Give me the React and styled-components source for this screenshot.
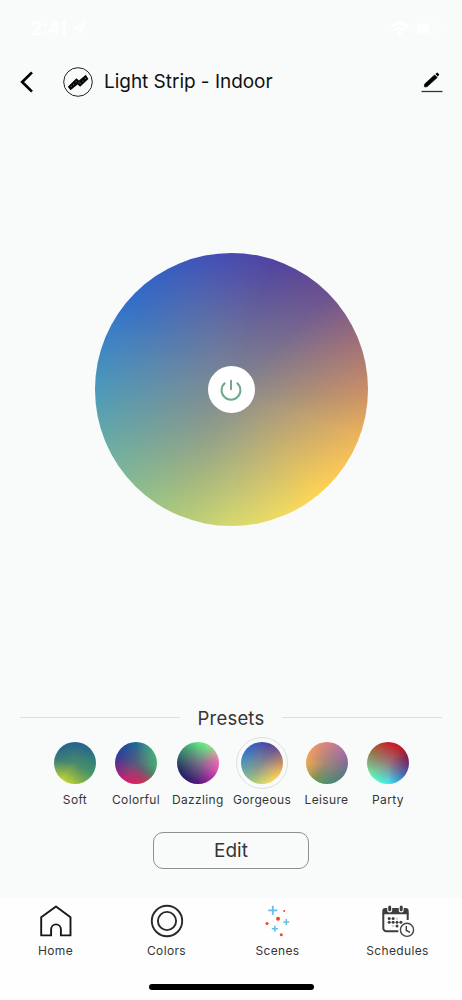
import React from "react";
import styled, { createGlobalStyle } from "styled-components";

const GlobalStyle = createGlobalStyle`
  *, *::before, *::after { box-sizing: border-box; }
  body { margin: 0; background: #f9fbfa; }
  button { font: inherit; color: inherit; background: none; border: 0; padding: 0; margin: 0; }
  svg { display: block; flex: none; }
`;

const Screen = styled.div`
  width: 462px;
  height: 1000px;
  display: flex;
  flex-direction: column;
  overflow: hidden;
  background: #f9fbfa;
  color: #353537;
  font-family: Inter, "Liberation Sans", sans-serif;
`;

const StatusBar = styled.div`
  height: 56px;
  flex: none;
  padding: 1px 20px 0 31px;
  display: flex;
  align-items: center;
  color: #fff;
`;

const Clock = styled.span`
  font-size: 18px;
  font-weight: 600;
  line-height: 20px;
  width: 42px;
  white-space: nowrap;
`;

const StatusIcons = styled.div`
  display: flex;
  align-items: center;
  gap: 6px;
  margin-left: auto;
`;

const Header = styled.header`
  height: 51px;
  flex: none;
  display: flex;
  align-items: center;
  padding: 0 19px 0 20px;
`;

const BackButton = styled.button`
  width: 43px;
`;

const Title = styled.h1`
  margin: 0 auto 0 11px;
  font-size: 19px;
  font-weight: 400;
  line-height: 24px;
  letter-spacing: -0.03px;
  color: #111;
  white-space: nowrap;
`;

const EditIconButton = styled.button`
  padding-top: 2px;
`;

const Stage = styled.main`
  height: 597px;
  flex: none;
  display: flex;
  justify-content: center;
  padding-top: 146px;
`;

const Wheel = styled.div`
  width: 273px;
  height: 273px;
  border-radius: 50%;
  display: flex;
  align-items: center;
  justify-content: center;
  background: ${(p) => p.$paint};
`;

const PowerButton = styled.button`
  width: 47px;
  height: 47px;
  border-radius: 50%;
  background: #fff;
  display: flex;
  align-items: center;
  justify-content: center;
`;

const SectionHeading = styled.div`
  height: 28px;
  flex: none;
  display: flex;
  align-items: center;
  justify-content: space-between;
  padding: 0 20px;
`;

const Rule = styled.span`
  width: 160px;
  height: 1px;
  margin-top: -1px;
  background: #dddfde;
`;

const SectionTitle = styled.h2`
  margin: 0;
  font-size: 18.5px;
  font-weight: 400;
  line-height: 28px;
  letter-spacing: 0.2px;
`;

const PresetRow = styled.div`
  height: 100px;
  flex: none;
  display: grid;
  grid-template-columns: 61px 61px 62.5px 66px 63px 60px;
  padding: 5px 0 0 44.5px;
`;

const Preset = styled.button`
  display: flex;
  flex-direction: column;
  align-items: center;
`;

const SwatchRing = styled.span`
  width: 52px;
  height: 52px;
  flex: none;
  border-radius: 50%;
  border: 1px solid ${(p) => (p.$selected ? "#dfe1e1" : "transparent")};
  display: flex;
  align-items: center;
  justify-content: center;
`;

const Swatch = styled.span`
  width: 42px;
  height: 42px;
  border-radius: 50%;
  background: ${(p) => p.$paint};
`;

const Caption = styled.span`
  font-size: 12px;
  line-height: 16px;
  letter-spacing: 0.35px;
  white-space: nowrap;
  margin-top: ${(p) => p.$gap};
`;

const EditButton = styled.button`
  width: 156px;
  height: 37px;
  flex: none;
  align-self: center;
  border: 1px solid #8e9090;
  border-radius: 10px;
  font-size: 19px;
  line-height: 35px;
`;

const BottomBar = styled.footer`
  margin-top: auto;
  height: 102px;
  flex: none;
  background: #fefefe;
  display: flex;
  flex-direction: column;
  align-items: center;
  padding-bottom: 10px;
  justify-content: space-between;
`;

const Tabs = styled.nav`
  display: grid;
  grid-template-columns: 111px 111px 111px 129px;
  width: 462px;
`;

const Tab = styled.button`
  display: flex;
  flex-direction: column;
  align-items: center;
  padding-top: 6px;
`;

const HomeIndicator = styled.span`
  width: 165px;
  height: 6px;
  border-radius: 3px;
  background: #000;
`;

// A colour wheel: rim hues run round the edge and melt into one tone in the middle.
const blend = (core, rim) =>
  `radial-gradient(closest-side, ${core}, ${core}00), conic-gradient(${rim})`;

const gorgeous = blend(
  "#83898f",
  "#474ab0, #51439e 20deg, #6b5090 45deg, #a17078 70deg, #c98e65 90deg, #edb45a 110deg, #fbc556 125deg, #fed454 140deg, #efdb62 160deg, #d6d96e 180deg, #b4cc78 200deg, #8abb90 225deg, #65a9a8 250deg, #4c99ba 270deg, #3d85c5 290deg, #316fc9 310deg, #375fc1 330deg, #4053b8 347deg, #474ab0"
);

const presets = [
  { name: "Soft", paint: blend("#4b8a6c", "#24628f, #24658b 40deg, #2f7b7c 80deg, #43956a 120deg, #7fae4c 155deg, #b4cf35 190deg, #bfd332 220deg, #83ac50 250deg, #397c79 280deg, #27678a 315deg, #24628f") },
  { name: "Colorful", paint: blend("#585c7c", "#1f6797, #36938a 30deg, #45b078 65deg, #48ad75 100deg, #577f62 125deg, #b43e5c 150deg, #e21e5e 180deg, #db1d66 210deg, #9c257d 240deg, #5e2b90 270deg, #263f9d 300deg, #1d4f9e 330deg, #1f6797") },
  { name: "Dazzling", paint: blend("#716f82", "#5bec7e, #75f088 30deg, #c6b29c 60deg, #f06bb0 85deg, #e54eb2 110deg, #a0229d 145deg, #51127c 180deg, #28156c 215deg, #20235d 245deg, #285065 275deg, #3b9b70 315deg, #5bec7e") },
  { name: "Gorgeous", paint: gorgeous, selected: true },
  { name: "Leisure", paint: blend("#a2847b", "#da8383, #b9769b 35deg, #a56ca3 60deg, #806b96 90deg, #5e778a 120deg, #508176 150deg, #489170 180deg, #759553 215deg, #c7a050 245deg, #eba954 270deg, #f39a65 310deg, #da8383") },
  { name: "Party", paint: blend("#977b7b", "#c51e24, #cc171e 20deg, #b4162b 50deg, #7d1b4e 75deg, #622f7b 95deg, #3f6fc1 130deg, #35bce7 160deg, #42ecef 180deg, #4efbcd 215deg, #6ce9a4 240deg, #86a878 275deg, #967244 305deg, #b74129 335deg, #c51e24") },
];

const LocationIcon = () => (
  <svg width="13" height="13" viewBox="0 0 13 13" fill="none" stroke="#fff" strokeWidth="1.5" strokeLinejoin="round">
    <path d="M1 6.2 12 1 7 12 6.3 6.8Z" />
  </svg>
);

const WifiIcon = () => (
  <svg width="19" height="14" viewBox="0 0 19 14" fill="none" stroke="#fff" strokeWidth="2.5">
    <path d="M1 5Q9.5-2 18 5M4 8.5Q9.5 4 15 8.5" />
    <path d="M6.7 10.5Q9.5 8.5 12.3 10.5L9.5 13.5Z" fill="#fff" stroke="none" />
  </svg>
);

const BatteryIcon = () => (
  <svg width="27" height="13" viewBox="0 0 27 13" fill="none">
    <rect x=".5" y=".5" width="24" height="12" rx="3.5" stroke="#fafcfb" />
    <rect x="2" y="2" width="12.5" height="9" rx="2" fill="#fff" />
    <path d="M26 4.5v4" stroke="#fbfcfc" />
  </svg>
);

const BackIcon = () => (
  <svg width="14" height="22" viewBox="0 0 14 22" fill="none" stroke="#000" strokeWidth="2.7">
    <path d="M12 1.4 2.2 11 12 20.6" />
  </svg>
);

const StripIcon = () => (
  <svg width="30" height="30" viewBox="0 0 30 30" fill="none">
    <circle cx="15" cy="15" r="14.3" stroke="#222" strokeWidth="1" />
    <path d="M4.8 19.8 13.4 11.3 15.9 13.4 22.8 7.8 25.4 11.9 17.1 19.7 14.6 17.6 7.5 23.2Z" fill="#050505" />
    <g fill="#9a9c9c">
      <circle cx="8.2" cy="19.5" r=".5" /><circle cx="10.7" cy="17.2" r=".5" />
      <circle cx="13.1" cy="14.8" r=".5" /><circle cx="17.2" cy="16.2" r=".5" />
      <circle cx="19.8" cy="13.9" r=".5" /><circle cx="22.3" cy="11.5" r=".5" />
    </g>
    <path d="m14.8 16.5 2.2-2" stroke="#777" strokeWidth=".5" />
  </svg>
);

const PencilIcon = () => (
  <svg width="22" height="21" viewBox="0 0 22 21" fill="none">
    <path d="m3.4 14.6.3-2.6L13.6 2.9l2.6 2.6-9.9 9-2.4.6Z" fill="#000" stroke="#000" strokeWidth=".7" strokeLinejoin="round" />
    <path d="m14.4 2 1.2-1.1q.7-.6 1.3 0l1 1q.6.6 0 1.3l-1.1 1.3Z" fill="#000" />
    <path d="M.5 19.5h21" stroke="#333" strokeWidth="1.3" />
  </svg>
);

const PowerIcon = () => (
  <svg width="22" height="22" viewBox="0 0 22 22" fill="none" stroke="#6dab91" strokeWidth="2" strokeLinecap="round">
    <path d="M11 1.7v8.6M4.7 4.3a9.4 9.4 0 1 0 12.6 0" />
  </svg>
);

const HomeIcon = () => (
  <svg width="32" height="34" viewBox="0 0 32 34" fill="none" stroke="#171717" strokeWidth="1.9" strokeLinejoin="round">
    <path d="M1.2 31.4V13.2L16 2.4l14.5 10.8v18.2h-9.6v-6.1a4.9 4.9 0 0 0-9.8 0v6.1Z" />
  </svg>
);

const ColorsIcon = () => (
  <svg width="34" height="34" viewBox="0 0 34 34" fill="none" stroke="#29292a" strokeWidth="1.9">
    <circle cx="17" cy="17" r="15.2" /><circle cx="17" cy="17" r="9.1" />
  </svg>
);

const ScenesIcon = () => (
  <svg width="26" height="34" viewBox="0 0 26 34" fill="none">
    <g stroke="#62c0e8">
      <path d="M7.8 1.8v9M3.3 6.3h9" strokeWidth="1.8" />
      <path d="M21.3 15v6M18.3 18h6M9.8 21.7v6M6.8 24.7h6" strokeWidth="1.5" />
    </g>
    <g fill="#ed4822">
      <circle cx="19.2" cy="7" r="1" /><circle cx="13" cy="14.7" r="2" />
      <circle cx="2" cy="19.4" r="1.5" /><circle cx="16.3" cy="30.8" r="1.5" />
    </g>
  </svg>
);

const SchedulesIcon = () => (
  <svg width="34" height="34" viewBox="0 0 34 34" fill="none">
    <path d="M4.3 3.9h20.4a3 3 0 0 1 3 3V10.2H1.3V6.9a3 3 0 0 1 3-3Z" fill="#3e3e40" />
    <path d="M2.3 9v15.2a3 3 0 0 0 3 3h12M26.7 9v7" stroke="#3e3e40" strokeWidth="2" />
    <path d="M8.7 4.2v1.9M20.2 4.2v1.9" stroke="#fefefe" strokeWidth="5" strokeLinecap="round" />
    <path d="M8.7 3v2.8M20.2 3v2.8" stroke="#3e3e40" strokeWidth="3" strokeLinecap="round" />
    <g fill="#3e3e40">
      <circle cx="8.2" cy="14.6" r="1.5" /><circle cx="12.1" cy="14.6" r="1.5" />
      <circle cx="8.2" cy="18.3" r="1.5" /><circle cx="12.1" cy="18.3" r="1.5" />
      <circle cx="16" cy="18.3" r="1.5" /><circle cx="19.9" cy="18.3" r="1.5" />
      <circle cx="16" cy="22" r="1.5" />
    </g>
    <circle cx="16" cy="14.6" r="1.2" fill="#d0d0d2" />
    <circle cx="12.1" cy="22" r="1.2" fill="#d0d0d2" />
    <circle cx="26" cy="25.8" r="8" fill="#fefefe" />
    <circle cx="26" cy="25.8" r="6.6" stroke="#454547" strokeWidth="1.4" />
    <path d="M25.3 22v4.5l3.8 1.8" stroke="#3e3e40" strokeWidth="1.4" />
  </svg>
);

const tabs = [
  { name: "Home", Icon: HomeIcon },
  { name: "Colors", Icon: ColorsIcon },
  { name: "Scenes", Icon: ScenesIcon },
  { name: "Schedules", Icon: SchedulesIcon },
];

export default function App() {
  return (
    <>
      <GlobalStyle />
      <Screen>
        <StatusBar>
          <Clock>2:41</Clock>
          <LocationIcon />
          <StatusIcons>
            <WifiIcon />
            <BatteryIcon />
          </StatusIcons>
        </StatusBar>
        <Header>
          <BackButton aria-label="Back"><BackIcon /></BackButton>
          <StripIcon />
          <Title>Light Strip - Indoor</Title>
          <EditIconButton aria-label="Rename"><PencilIcon /></EditIconButton>
        </Header>
        <Stage>
          <Wheel $paint={gorgeous}>
            <PowerButton aria-label="Power"><PowerIcon /></PowerButton>
          </Wheel>
        </Stage>
        <SectionHeading>
          <Rule />
          <SectionTitle>Presets</SectionTitle>
          <Rule />
        </SectionHeading>
        <PresetRow>
          {presets.map((p) => (
            <Preset key={p.name}>
              <SwatchRing $selected={p.selected}>
                <Swatch $paint={p.paint} />
              </SwatchRing>
              <Caption $gap="3px">{p.name}</Caption>
            </Preset>
          ))}
        </PresetRow>
        <EditButton>Edit</EditButton>
        <BottomBar>
          <Tabs>
            {tabs.map(({ name, Icon }) => (
              <Tab key={name}>
                <Icon />
                <Caption $gap="5px">{name}</Caption>
              </Tab>
            ))}
          </Tabs>
          <HomeIndicator />
        </BottomBar>
      </Screen>
    </>
  );
}
